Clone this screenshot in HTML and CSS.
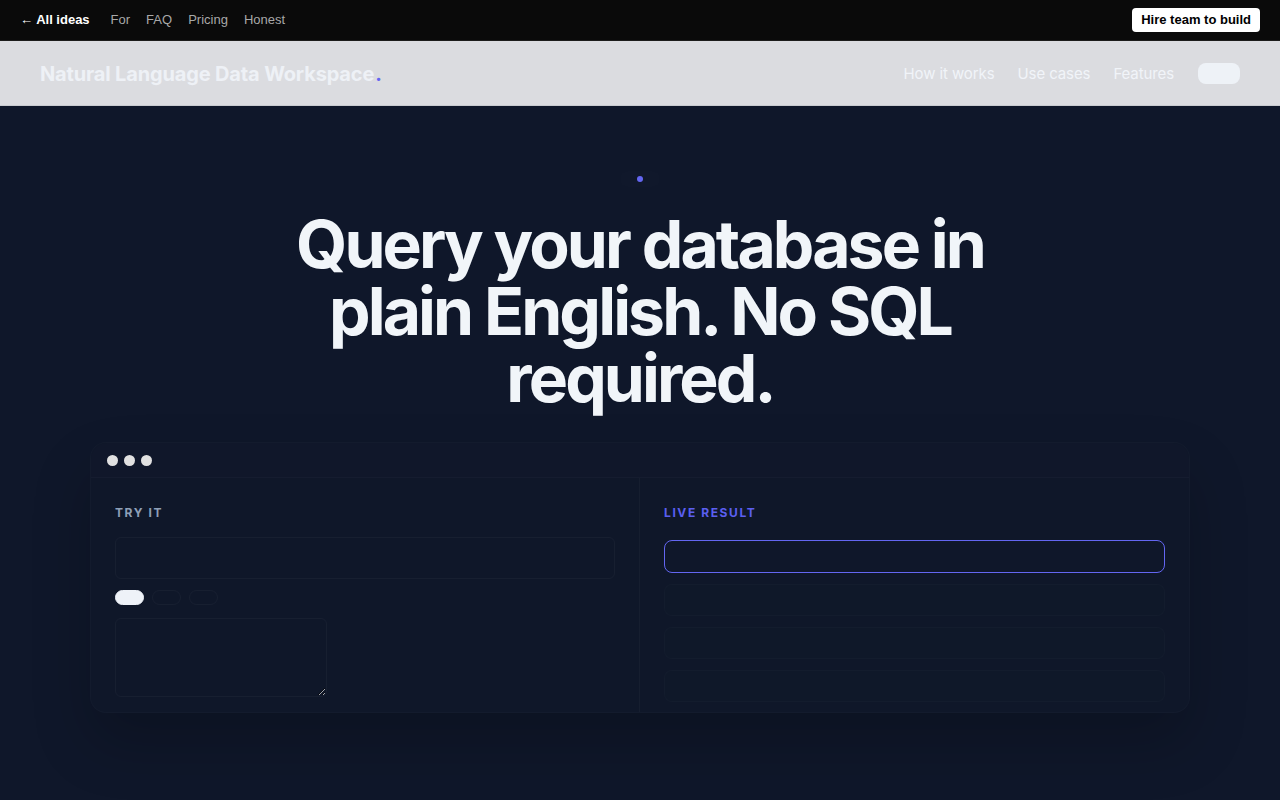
FILE: index.html
```html
<!DOCTYPE html>
<html lang="en">
<head>
<meta charset="utf-8">
<title>Natural Language Data Workspace</title>
<link rel="stylesheet" href="styles.css">
</head>
<body>
<div class="topbar">
  <nav class="toplinks">
    <a class="back" href="#">← All ideas</a>
    <a href="#">For</a>
    <a href="#">FAQ</a>
    <a href="#">Pricing</a>
    <a href="#">Honest</a>
  </nav>
  <a class="hire" href="#">Hire team to build</a>
</div>
<header class="nav">
  <div class="logo">Natural Language Data Workspace<span class="logo-dot">.</span></div>
  <nav class="navlinks">
    <a href="#">How it works</a>
    <a href="#">Use cases</a>
    <a href="#">Features</a>
    <span class="nav-btn"></span>
  </nav>
</header>
<main class="hero">
  <div class="badge"><span class="badge-dot"></span></div>
  <h1 class="title">Query your database in plain English. No SQL required.</h1>
  <section class="window">
    <div class="window-head">
      <span class="wdot"></span><span class="wdot"></span><span class="wdot"></span>
    </div>
    <div class="window-body">
      <div class="col col-left">
        <div class="label">TRY IT</div>
        <div class="input"></div>
        <div class="chips">
          <span class="chip chip-on"></span>
          <span class="chip"></span>
          <span class="chip"></span>
        </div>
        <textarea class="area"></textarea>
      </div>
      <div class="col col-right">
        <div class="label label-accent">LIVE RESULT</div>
        <div class="result result-on"></div>
        <div class="result"></div>
        <div class="result"></div>
        <div class="result"></div>
      </div>
    </div>
  </section>
</main>
</body>
</html>
```

FILE: styles.css
```css
* { box-sizing: border-box; }
html, body { margin: 0; padding: 0; }
body {
  background: #0f172a;
  font-family: Inter, "Liberation Sans", sans-serif;
  height: 800px;
  overflow: hidden;
}
a { text-decoration: none; }

.topbar {
  height: 41px;
  background: #0a0a0a;
  border-bottom: 1px solid #1c1c1c;
  display: flex;
  align-items: center;
  justify-content: space-between;
  padding: 0 20px 1px;
  font-family: "Liberation Sans", Arial, sans-serif;
  font-size: 13px;
}
.toplinks { display: flex; align-items: center; }
.toplinks a { color: #a8a8a8; margin-right: 16px; }
.toplinks a.back { color: #ffffff; font-weight: bold; margin-right: 21px; }
.hire {
  background: #ffffff;
  color: #000000;
  font-weight: bold;
  padding: 5px 9px;
  border-radius: 4px;
  line-height: 14px;
}

.nav {
  height: 65px;
  background: #dbdce0;
  border-bottom: 1px solid #c9cbd0;
  display: flex;
  align-items: center;
  justify-content: space-between;
  padding: 1px 40px 0;
}
.logo {
  font-size: 20px;
  font-weight: 700;
  letter-spacing: -0.15px;
  color: #eef1f6;
  padding-top: 1px;
}
.logo-dot { color: #6366f1; margin-left: 1px; }
.navlinks { display: flex; align-items: center; gap: 23px; }
.navlinks a { color: #f1f4f9; font-size: 15px; letter-spacing: -0.1px; }
.nav-btn {
  width: 42px; height: 21px;
  background: #eef2f7;
  border-radius: 8px;
  margin-left: 1px;
}

.hero {
  display: flex;
  flex-direction: column;
  align-items: center;
  padding-top: 65px;
}
.badge {
  width: 40px; height: 16px;
  border-radius: 8px;
  background: rgba(255,255,255,0.006);
  display: flex; align-items: center; justify-content: center;
}
.badge-dot { width: 6px; height: 6px; border-radius: 50%; background: #6366f1; }
.title {
  margin: 24px 0 0;
  max-width: 740px;
  text-align: center;
  color: #f1f5f9;
  font-size: 66px;
  line-height: 67px;
  font-weight: 700;
  letter-spacing: -2.9px;
}

.window {
  margin-top: 30px;
  width: 1100px;
  border: 1px solid rgba(255,255,255,0.02);
  border-radius: 16px;
  background: #0f1729;
  box-shadow: 0 0 0 38px rgba(255,255,255,0.003), 0 30px 60px rgba(0,0,0,0.2);
}
.window-head {
  height: 35px;
  display: flex; align-items: center; gap: 6px;
  padding-left: 16px;
  padding-top: 1px;
  border-bottom: 1px solid rgba(255,255,255,0.025);
  background: #10172a;
  border-radius: 16px 16px 0 0;
}
.wdot { width: 11px; height: 11px; border-radius: 50%; background: #e1e1e1; }
.window-body { display: grid; grid-template-columns: 549px 1fr; height: 234px; }
.col { padding: 29px 24px 0 24px; }
.col-left { border-right: 1px solid rgba(255,255,255,0.03); }
.label {
  font-size: 12px;
  font-weight: 700;
  letter-spacing: 1.6px;
  color: #8fa0b8;
  line-height: 12px;
}
.label-accent { color: #5b5ff0; }
.input {
  margin-top: 18px;
  height: 42px;
  border: 1px solid rgba(255,255,255,0.035);
  border-radius: 6px;
}
.chips { display: flex; gap: 8px; margin-top: 11px; }
.chip {
  width: 29px; height: 15px;
  border-radius: 8px;
  border: 1px solid rgba(255,255,255,0.035);
}
.chip-on { background: #eef2f8; border-color: #eef2f8; }
.area {
  display: block;
  margin-top: 13px;
  width: 212px; height: 79px;
  background: transparent;
  border: 1px solid rgba(255,255,255,0.035);
  border-radius: 6px;
  resize: both;
  color-scheme: dark;
  outline: none;
}
.result {
  height: 32px;
  margin-top: 11px;
  border-radius: 8px;
  border: 1px solid rgba(255,255,255,0.02);
  background: #0f1829;
}
.result-on {
  margin-top: 21px;
  height: 33px;
  border: 1px solid #6366f1;
  background: #0f172a;
}
```
